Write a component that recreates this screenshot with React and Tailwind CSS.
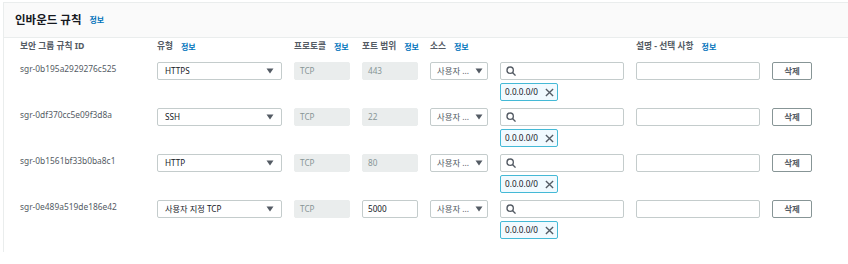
import React from 'react';

const RULES = [
    { id: 'sgr-0b195a2929276c525', type: 'HTTPS', port: '443', portEditable: false },
    { id: 'sgr-0df370cc5e09f3d8a', type: 'SSH', port: '22', portEditable: false },
    { id: 'sgr-0b1561bf33b0ba8c1', type: 'HTTP', port: '80', portEditable: false },
    { id: 'sgr-0e489a519de186e42', type: '사용자 지정 TCP', port: '5000', portEditable: true },
];

const Info = () => (
    <span className="ml-[8px] text-[8px] font-bold text-[#0073bb]">정보</span>
);

const Caret = () => (
    <svg width="8" height="6" viewBox="0 0 8 6" className="shrink-0">
        <path d="M0.5 0.5 L7.5 0.5 L4 5.5 Z" fill="#545b64" />
    </svg>
);

function Rule({ rule }) {
    return (
        <div className="grid grid-cols-[125px_125px_56px_56px_58px_124px_124px_40px] gap-x-3 mb-[7px]">
            <div className="leading-[14px] text-[8.4px] text-[#545b64] whitespace-nowrap">{rule.id}</div>

            <div className="h-[18px] border border-[#c4cccc] rounded-[2px] flex items-center justify-between pl-[7px] pr-[7px] text-[8.2px] text-[#16191f]">
                <span>{rule.type}</span>
                <Caret />
            </div>

            <div className="h-[18px] bg-[#eaeded] border border-[#eaeded] rounded-[2px] flex items-center pl-[5px] text-[8.2px] text-[#879596]">
                TCP
            </div>

            {rule.portEditable ? (
                <div className="h-[18px] border border-[#c4cccc] rounded-[2px] flex items-center pl-[5px] text-[8.2px] text-[#16191f]">
                    {rule.port}
                </div>
            ) : (
                <div className="h-[18px] bg-[#eaeded] border border-[#eaeded] rounded-[2px] flex items-center pl-[5px] text-[8.2px] text-[#879596]">
                    {rule.port}
                </div>
            )}

            <div className="h-[18px] border border-[#c4cccc] rounded-[2px] flex items-center justify-between pl-[6px] pr-[4px] text-[8.4px] text-[#545b64] whitespace-nowrap">
                <span>사용자 ...</span>
                <Caret />
            </div>

            <div className="flex flex-col gap-[3px]">
                <div className="h-[18px] border border-[#c4cccc] rounded-[2px] flex items-center pl-[5px]">
                    <svg width="10" height="10" viewBox="0 0 12 12" fill="none" stroke="#545b64" strokeWidth="1.6">
                        <circle cx="5" cy="5" r="3.8" />
                        <path d="M7.8 7.8 L11 11" strokeLinecap="round" />
                    </svg>
                </div>
                <div className="w-[58px] h-[18px] bg-[#f1faff] border border-[#44b9d6] rounded-[2px] flex items-center pl-[4px] gap-[7px] text-[8.2px] text-[#16191f]">
                    <span>0.0.0.0/0</span>
                    <svg width="9" height="9" viewBox="0 0 10 10" stroke="#545b64" strokeWidth="1.5">
                        <path d="M1 1 L9 9 M9 1 L1 9" />
                    </svg>
                </div>
            </div>

            <div className="h-[18px] border border-[#c4cccc] rounded-[2px]" />

            <button className="h-[18px] border border-[#879596] rounded-[2px] bg-white text-[8.5px] font-bold text-[#545b64] flex items-center justify-center">
                삭제
            </button>
        </div>
    );
}

export default function App() {
    return (
        <div className="w-[848px] h-[264px] bg-white pt-[2px] pl-[3px] font-['Noto_Sans','Noto_Sans_CJK_KR',sans-serif]">
            <div className="h-[250px] border-l border-t border-[#eaeded]">
                <div className="h-[35px] bg-[#fafafa] border-b border-[#eaeded] flex items-center pl-[11px]">
                    <span className="text-[11.5px] font-bold text-[#16191f]">인바운드 규칙</span>
                    <Info />
                </div>

                <div className="pl-[16px] pt-[1px]">
                    <div className="grid grid-cols-[125px_125px_56px_56px_58px_124px_124px_40px] gap-x-3 h-[16px] mb-[7px] text-[8.7px] font-bold text-[#545b64] items-center whitespace-nowrap">
                        <div>보안 그룹 규칙 ID</div>
                        <div className="flex items-center">유형<Info /></div>
                        <div className="flex items-center">프로토콜<Info /></div>
                        <div className="flex items-center">포트 범위<Info /></div>
                        <div className="flex items-center">소스<Info /></div>
                        <div />
                        <div className="flex items-center">설명 - 선택 사항<Info /></div>
                        <div />
                    </div>

                    {RULES.map((rule) => (
                        <Rule key={rule.id} rule={rule} />
                    ))}
                </div>
            </div>
        </div>
    );
}
